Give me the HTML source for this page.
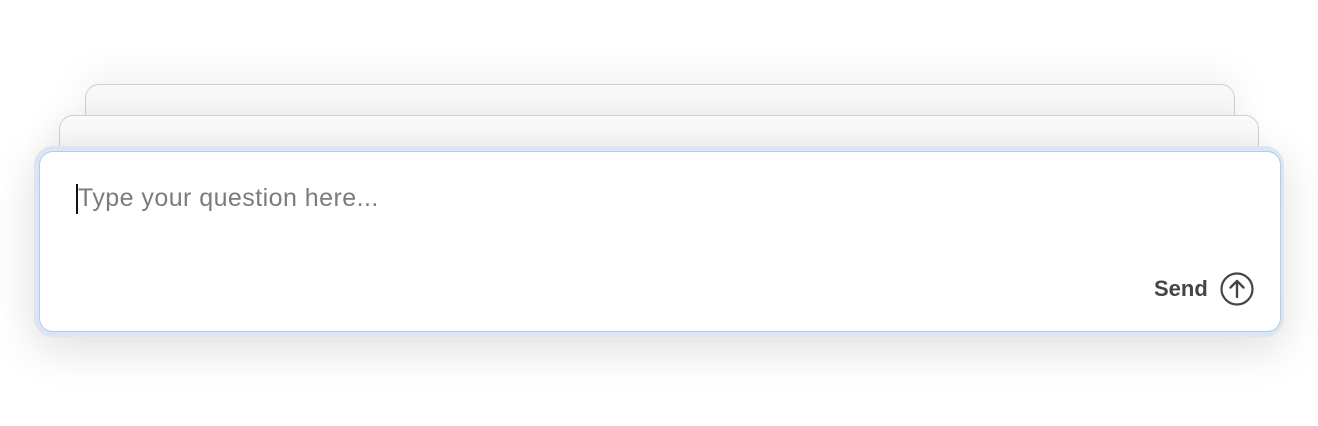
<!DOCTYPE html>
<html><head><style>
body{margin:0;width:1318px;height:426px;background:#fff;position:relative;overflow:hidden;font-family:"Liberation Sans",sans-serif}
.c{position:absolute;box-sizing:border-box;border:1.5px solid #cfcfd2;border-radius:14px;background:linear-gradient(#f9f9fa,#f1f1f3)}
</style></head><body>
<div class="c" style="left:85px;top:84px;width:1150px;height:80px;box-shadow:0 -10px 40px rgba(0,0,0,0.06)"></div>
<div class="c" style="left:59px;top:115px;width:1200px;height:60px;background:linear-gradient(#fbfbfb,#f3f3f4);box-shadow:-10px 0 30px rgba(0,0,0,0.05)"></div>
<div style="position:absolute;left:34px;top:146px;width:1250px;height:191px;border-radius:19px;background:#dde5ee;box-shadow:0 12px 45px rgba(0,0,0,0.13)"></div>
<div style="position:absolute;left:39px;top:151px;width:1242px;height:181px;box-sizing:border-box;border:1.5px solid #a8cdf6;border-radius:14px;background:#fff"></div>
<div style="position:absolute;left:76px;top:184px;width:1.5px;height:30px;background:#111"></div>
<div style="position:absolute;left:78px;top:183px;font-size:25px;letter-spacing:0.45px;color:#7b7b80;line-height:30px">Type your question here...</div>
<div style="position:absolute;left:1154px;top:275px;font-size:22px;font-weight:bold;color:#454548;line-height:28px">Send</div>
<svg style="position:absolute;left:1219px;top:271px" width="36" height="36" viewBox="0 0 36 36"><circle cx="18" cy="18" r="15.5" fill="none" stroke="#454548" stroke-width="2.2"/><path d="M18 26V10M11.5 16.5L18 10l6.5 6.5" fill="none" stroke="#454548" stroke-width="2.4" stroke-linecap="round" stroke-linejoin="round"/></svg>
</body></html>
